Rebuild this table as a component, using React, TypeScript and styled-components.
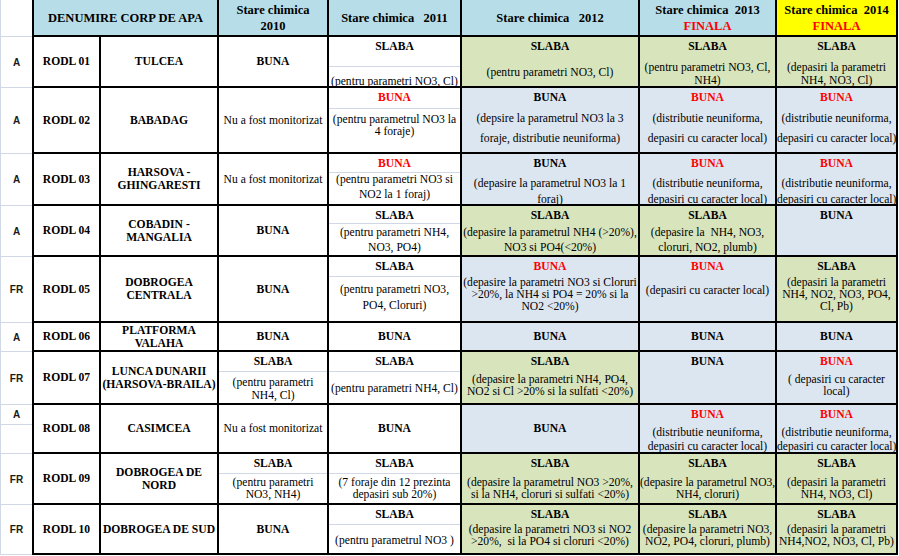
import React from "react";
import styled, { createGlobalStyle } from "styled-components";

const GlobalStyle = createGlobalStyle`
  html, body {
    margin: 0;
    padding: 0;
    background: #fff;
  }
  body {
    font-family: "Liberation Serif", "Times New Roman", serif;
    color: #000;
  }
`;

type Bg = "w" | "g" | "b";

type Entry = {
  s?: string;
  red?: boolean;
  t?: string;
  n?: string[];
  at?: number;
  lh?: number;
  split?: number;
  bg?: Bg;
  center?: boolean;
};

type Row = {
  code: string;
  codeSplit?: number;
  id: string;
  name: string[];
  cells: Entry[];
};

const BG: Record<Bg, string> = {
  w: "#ffffff",
  g: "#d8e4bc",
  b: "#dce6f1",
};

const NU = "Nu a fost monitorizat";
const NEUNIF = ["(distributie neuniforma,", "depasiri cu caracter local)"];

const rows: Row[] = [
  {
    code: "A",
    id: "RODL 01",
    name: ["TULCEA"],
    cells: [
      { s: "BUNA", center: true },
      { s: "SLABA", split: 29, n: ["(pentru parametri NO3, Cl)"], at: 44, lh: 15 },
      { s: "SLABA", bg: "g", n: ["(pentru parametri NO3, Cl)"], at: 35, lh: 15 },
      { s: "SLABA", bg: "g", n: ["(pentru parametri NO3, Cl,", "NH4)"], at: 30, lh: 13 },
      { s: "SLABA", bg: "g", n: ["(depasiri la parametri", "NH4, NO3, Cl)"], at: 30, lh: 13 },
    ],
  },
  {
    code: "A",
    id: "RODL 02",
    name: ["BABADAG"],
    cells: [
      { t: NU, center: true },
      { s: "BUNA", red: true, split: 20, n: ["(pentru parametrul NO3 la", "4 foraje)"], at: 32, lh: 12 },
      { s: "BUNA", bg: "b", n: ["(depsire la parametrul NO3 la 3", "foraje, distributie neuniforma)"], at: 31, lh: 20 },
      { s: "BUNA", red: true, bg: "b", n: NEUNIF, at: 31, lh: 20 },
      { s: "BUNA", red: true, bg: "b", n: NEUNIF, at: 31, lh: 20 },
    ],
  },
  {
    code: "A",
    id: "RODL 03",
    name: ["HARSOVA -", "GHINGARESTI"],
    cells: [
      { t: NU, center: true },
      { s: "BUNA", red: true, split: 18, n: ["(pentru parametri NO3 si", "NO2 la 1 foraj)"], at: 25, lh: 15 },
      { s: "BUNA", bg: "b", n: ["(depasire la parametrul NO3 la 1", "foraj)"], at: 30, lh: 16 },
      { s: "BUNA", red: true, bg: "b", n: NEUNIF, at: 30, lh: 16 },
      { s: "BUNA", red: true, bg: "b", n: NEUNIF, at: 30, lh: 16 },
    ],
  },
  {
    code: "A",
    id: "RODL 04",
    name: ["COBADIN -", "MANGALIA"],
    cells: [
      { s: "BUNA", center: true },
      { s: "SLABA", split: 17, n: ["(pentru parametri NH4,", "NO3, PO4)"], at: 26, lh: 15 },
      { s: "SLABA", bg: "g", n: ["(depasire la parametrul NH4 (>20%),", "NO3 si PO4(<20%)"], at: 26, lh: 15 },
      { s: "SLABA", bg: "g", n: ["(depasire la  NH4, NO3,", "cloruri, NO2, plumb)"], at: 26, lh: 15 },
      { s: "BUNA", bg: "b" },
    ],
  },
  {
    code: "FR",
    id: "RODL 05",
    name: ["DOBROGEA", "CENTRALA"],
    cells: [
      { s: "BUNA", center: true },
      { s: "SLABA", split: 19, n: ["(pentru parametri NO3,", "PO4, Cloruri)"], at: 33, lh: 16 },
      {
        s: "BUNA",
        red: true,
        bg: "b",
        n: ["(depasire la parametri NO3 si Cloruri", ">20%, la NH4 si PO4 = 20% si la", "NO2 <20%)"],
        at: 26,
        lh: 12,
      },
      { s: "BUNA", red: true, bg: "b", n: ["(depasiri cu caracter local)"], at: 33, lh: 15 },
      { s: "SLABA", bg: "g", n: ["(depasiri la parametri", "NH4, NO2, NO3, PO4,", "Cl, Pb)"], at: 26, lh: 12 },
    ],
  },
  {
    code: "A",
    id: "RODL 06",
    name: ["PLATFORMA", "VALAHA"],
    cells: [
      { s: "BUNA", center: true },
      { s: "BUNA", center: true },
      { s: "BUNA", bg: "b", center: true },
      { s: "BUNA", bg: "b", center: true },
      { s: "BUNA", bg: "b", center: true },
    ],
  },
  {
    code: "FR",
    id: "RODL 07",
    name: ["LUNCA DUNARII", "(HARSOVA-BRAILA)"],
    cells: [
      { s: "SLABA", split: 19, n: ["(pentru parametri", "NH4, Cl)"], at: 30, lh: 13 },
      { s: "SLABA", split: 19, n: ["(pentru parametri NH4, Cl)"], at: 36, lh: 15 },
      {
        s: "SLABA",
        bg: "g",
        n: ["(depasire la parametri NH4, PO4,", "NO2 si Cl >20% si la sulfati <20%)"],
        at: 28,
        lh: 12,
      },
      { s: "BUNA", bg: "b" },
      { s: "BUNA", red: true, bg: "b", n: ["( depasiri cu caracter", "local)"], at: 28, lh: 12 },
    ],
  },
  {
    code: "A",
    codeSplit: 19,
    id: "RODL 08",
    name: ["CASIMCEA"],
    cells: [
      { t: NU, center: true },
      { s: "BUNA", center: true },
      { s: "BUNA", bg: "b", center: true },
      { s: "BUNA", red: true, bg: "b", n: NEUNIF, at: 28, lh: 14 },
      { s: "BUNA", red: true, bg: "b", n: NEUNIF, at: 28, lh: 14 },
    ],
  },
  {
    code: "FR",
    id: "RODL 09",
    name: ["DOBROGEA DE", "NORD"],
    cells: [
      { s: "SLABA", split: 19, n: ["(pentru parametri", "NO3, NH4)"], at: 29, lh: 12 },
      { s: "SLABA", split: 19, n: ["(7 foraje din 12 prezinta", "depasiri sub 20%)"], at: 29, lh: 12 },
      {
        s: "SLABA",
        bg: "g",
        n: ["(depasire la parametrul NO3 >20%,", "si la NH4, cloruri si sulfati <20%)"],
        at: 29,
        lh: 12,
      },
      { s: "SLABA", bg: "g", n: ["(depasire la parametrul NO3,", "NH4, cloruri)"], at: 29, lh: 12 },
      { s: "SLABA", bg: "g", n: ["(depasiri la parametri", "NH4, NO3, Cl)"], at: 29, lh: 12 },
    ],
  },
  {
    code: "FR",
    id: "RODL 10",
    name: ["DOBROGEA DE SUD"],
    cells: [
      { s: "BUNA", center: true },
      { s: "SLABA", split: 19, n: ["(pentru parametrul NO3 )"], at: 35, lh: 15 },
      {
        s: "SLABA",
        bg: "g",
        n: ["(depasire la parametri NO3 si NO2", ">20%,  si la PO4 si cloruri <20%)"],
        at: 25,
        lh: 12,
      },
      { s: "SLABA", bg: "g", n: ["(depasire la parametri NO3,", "NO2, PO4, cloruri, plumb)"], at: 25, lh: 12 },
      { s: "SLABA", bg: "g", n: ["(depasiri la parametri", "NH4,NO2, NO3, Cl, Pb)"], at: 25, lh: 12 },
    ],
  },
];

function App() {
  return (
    <>
      <GlobalStyle />
      <Sheet>
        <CodeCell />
        <Head $span={2} $first>
          DENUMIRE CORP DE APA
        </Head>
        <Head>{"Stare chimica\n2010"}</Head>
        <Head>{"Stare chimica   2011"}</Head>
        <Head>{"Stare chimica   2012"}</Head>
        <Head>
          {"Stare chimica  2013"}
          <Red>FINALA</Red>
        </Head>
        <Head $yellow>
          {"Stare chimica  2014"}
          <Red>FINALA</Red>
        </Head>

        {rows.map((row) => (
          <React.Fragment key={row.id}>
            {row.codeSplit ? (
              <CodeCell $split>
                <CodeTop $h={row.codeSplit}>{row.code}</CodeTop>
              </CodeCell>
            ) : (
              <CodeCell>{row.code}</CodeCell>
            )}
            <Cell $bg="w" $first $center>
              <Label>{row.id}</Label>
            </Cell>
            <Cell $bg="w" $center>
              <Label>{row.name.join("\n")}</Label>
            </Cell>
            {row.cells.map((e, i) => (
              <YearCell key={i} e={e} />
            ))}
          </React.Fragment>
        ))}
      </Sheet>
    </>
  );
}

function YearCell({ e }: { e: Entry }) {
  const bg = e.bg ?? "w";

  if (e.center) {
    return (
      <Cell $bg={bg} $center>
        {e.t ? <Label $plain>{e.t}</Label> : <Label $red={e.red}>{e.s}</Label>}
      </Cell>
    );
  }

  const lh = e.lh ?? 15;
  const statusH = e.split ? e.split + 1 : 20;
  const mt = e.at !== undefined ? e.at - lh / 2 - statusH : 0;

  return (
    <Cell $bg={bg}>
      <Status $red={e.red} $split={e.split}>
        {e.s}
      </Status>
      {e.n && (
        <Note $mt={mt} $lh={lh}>
          {e.n.join("\n")}
        </Note>
      )}
    </Cell>
  );
}

const Sheet = styled.div`
  display: grid;
  grid-template-columns: 32px 69px 118px 110px 133px 178px 137px 121px;
  grid-template-rows: 37px 51px 66px 52px 51px 66px 29px 53px 49px 51px 50px;
  width: 898px;
`;

const CodeCell = styled.div<{ $split?: boolean }>`
  box-sizing: border-box;
  border-left: 1px solid #d0d7e5;
  border-bottom: 1px solid #d0d7e5;
  display: flex;
  flex-direction: column;
  align-items: ${(p) => (p.$split ? "stretch" : "center")};
  justify-content: ${(p) => (p.$split ? "flex-start" : "center")};
  font-family: "Liberation Sans", Arial, sans-serif;
  font-weight: bold;
  font-size: 10px;
  color: #1a1a1a;
`;

const CodeTop = styled.div<{ $h: number }>`
  height: ${(p) => p.$h}px;
  line-height: ${(p) => p.$h}px;
  text-align: center;
  border-bottom: 1px solid #d0d7e5;
`;

const Head = styled.div<{ $yellow?: boolean; $span?: number; $first?: boolean }>`
  grid-column: span ${(p) => p.$span ?? 1};
  box-sizing: border-box;
  background: ${(p) => (p.$yellow ? "#ffff00" : "#b7dee8")};
  border-right: 2px solid #000;
  border-bottom: 2px solid #000;
  border-left: ${(p) => (p.$first ? "2px solid #000" : "none")};
  display: flex;
  flex-direction: column;
  align-items: center;
  justify-content: center;
  font-weight: bold;
  font-size: 12.5px;
  line-height: 16px;
  white-space: pre;
  text-align: center;
`;

const Red = styled.span`
  color: #ff0000;
`;

const Cell = styled.div<{ $bg: Bg; $first?: boolean; $center?: boolean }>`
  box-sizing: border-box;
  background: ${(p) => BG[p.$bg]};
  border-right: 2px solid #000;
  border-bottom: 2px solid #000;
  border-left: ${(p) => (p.$first ? "2px solid #000" : "none")};
  display: flex;
  flex-direction: column;
  justify-content: ${(p) => (p.$center ? "center" : "flex-start")};
  align-items: stretch;
  text-align: center;
  min-width: 0;
`;

const Label = styled.div<{ $plain?: boolean; $red?: boolean }>`
  font-weight: ${(p) => (p.$plain ? "normal" : "bold")};
  font-size: 11.6px;
  line-height: 13px;
  white-space: pre;
  color: ${(p) => (p.$red ? "#ff0000" : "#000")};
`;

const Status = styled.div<{ $red?: boolean; $split?: number }>`
  flex: none;
  height: ${(p) => (p.$split ? `${p.$split}px` : "20px")};
  line-height: 20px;
  font-weight: bold;
  font-size: 11.6px;
  color: ${(p) => (p.$red ? "#ff0000" : "#000")};
  border-bottom: ${(p) => (p.$split ? "1px solid #d0d7e5" : "none")};
`;

const Note = styled.div<{ $mt: number; $lh: number }>`
  margin-top: ${(p) => p.$mt}px;
  line-height: ${(p) => p.$lh}px;
  font-size: 11.6px;
  white-space: pre;
`;

export default App;
